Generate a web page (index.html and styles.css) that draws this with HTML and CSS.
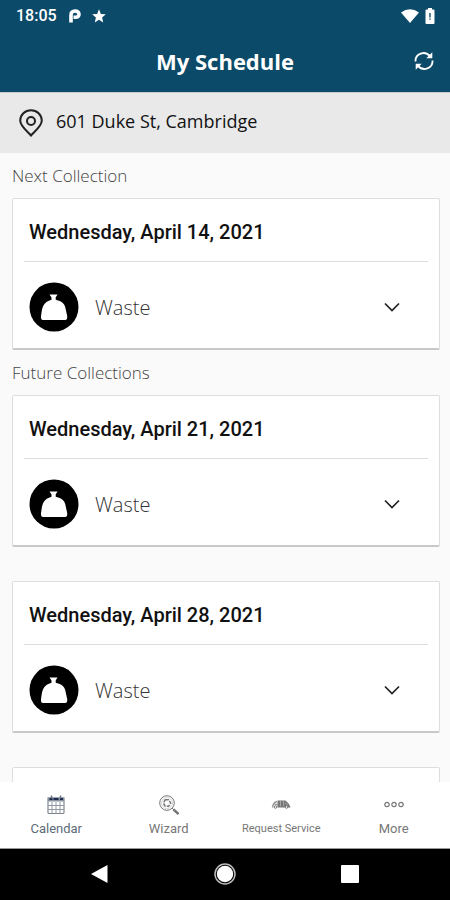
FILE: index.html
```html
<!DOCTYPE html>
<html lang="en">
<head>
<meta charset="utf-8">
<meta name="viewport" content="width=device-width, initial-scale=1">
<title>My Schedule</title>
<link rel="stylesheet" href="styles.css">
</head>
<body>
<svg class="symbols" aria-hidden="true">
  <symbol id="waste" viewBox="0 0 50 50">
    <circle cx="25" cy="25" r="24.5" fill="#000"/>
    <path fill="#fff" d="M20.500 12.500h8l-1.800 3v2.300l2.500.8c4 1.200 6 3.400 7 6.400l2 9q.4 4-2 4H14q-2.400 0-2-4l1-6.500c1-4.500 3.500-7.500 7.500-8.900l2-.8v-2.300z"/>
  </symbol>
  <symbol id="chevron" viewBox="0 0 18 18">
    <path d="M2 5.500l7 7 7-7" fill="none" stroke="#222" stroke-width="1.700"/>
  </symbol>
</svg>

<div class="status">
  <time class="clock">18:05</time>
  <svg width="12" height="14" viewBox="0 0 12 14"><path fill="none" stroke="#fff" stroke-width="3.600" d="M2 13.500V6q0-4 4-4 4 0 4 3.300 0 3-3.600 3H4.500"/></svg>
  <svg class="star" width="14" height="14" viewBox="0 0 14 14"><path fill="#fff" d="M7 .3l1.900 4.600 4.900.4-3.700 3.200 1.100 4.900L7 10.800l-4.200 2.600 1.100-4.900L.2 5.300l4.900-.4z"/></svg>
  <svg class="wifi" width="18" height="14" viewBox="0 0 18 14"><path fill="#fff" d="M0 3.500Q9-3.200 18 3.500L9 14z"/></svg>
  <svg width="10" height="16" viewBox="0 0 10 16"><path fill="#fff" d="M3 0h4v1.500h1.500q1 0 1 1V15q0 1-1 1h-7q-1 0-1-1V2.500q0-1 1-1H3z"/><path stroke="#0b4a68" stroke-width="1.400" d="M5 5v4.500M5 10.500v1.300"/></svg>
</div>

<header class="header">
  <h1>My Schedule</h1>
  <button class="refresh" type="button" aria-label="Refresh">
    <svg width="20" height="20" viewBox="0 0 20 20"><g fill="none" stroke="#fff" stroke-width="1.800"><path d="M1.500 10.500C1 2.500 11-.8 16 5.200M18.500 9.500C19 17.500 9 20.800 4 14.800"/></g><path fill="#fff" d="M18.300 1.200v6h-6zM1.700 18.800v-6h6z"/></svg>
  </button>
</header>

<div class="address">
  <svg width="24" height="28" viewBox="0 0 24 28"><g fill="none" stroke="#222" stroke-width="2"><path d="M12 26.500C9 23 1.200 17.500 1.200 11.600a10.800 10.400 0 0 1 21.600 0C22.800 17.500 15 23 12 26.500z"/><circle cx="12" cy="12" r="4"/></g></svg>
  <span>601 Duke St, Cambridge</span>
</div>

<main class="content">
  <h2>Next Collection</h2>
  <section class="card">
    <h3>Wednesday, April 14, 2021</h3>
    <button class="item" type="button" aria-expanded="false">
      <svg width="50" height="50"><use href="#waste"/></svg>
      <span>Waste</span>
      <svg class="chevron" width="18" height="18"><use href="#chevron"/></svg>
    </button>
  </section>

  <h2>Future Collections</h2>
  <div class="cards">
    <section class="card">
      <h3>Wednesday, April 21, 2021</h3>
      <button class="item" type="button" aria-expanded="false">
        <svg width="50" height="50"><use href="#waste"/></svg>
        <span>Waste</span>
        <svg class="chevron" width="18" height="18"><use href="#chevron"/></svg>
      </button>
    </section>
    <section class="card">
      <h3>Wednesday, April 28, 2021</h3>
      <button class="item" type="button" aria-expanded="false">
        <svg width="50" height="50"><use href="#waste"/></svg>
        <span>Waste</span>
        <svg class="chevron" width="18" height="18"><use href="#chevron"/></svg>
      </button>
    </section>
    <section class="card"></section>
  </div>
</main>

<nav class="tabs">
  <a class="active" href="#calendar">
    <svg width="20" height="20" viewBox="0 0 20 20"><path fill="#fff" stroke="#7d8792" stroke-width="1.200" d="M2 3h16v14.500q0 1-1 1H3q-1 0-1-1z"/><path stroke="#9099a4" d="M2 10.500h16M2 14.500h16M6 7v11M10 7v11M14 7v11"/><path fill="#89929c" d="M2 2.500h16v4H2z"/><path fill="#1c2b50" d="M3.500 3h3v2h-3zM7.500 3h5v2h-5zM14 3h3v2h-3z"/><path stroke="#68717f" stroke-width="1.500" d="M5.500.5v3M14.500.5v3"/></svg>
    <span>Calendar</span>
  </a>
  <a href="#wizard">
    <svg width="20" height="20" viewBox="0 0 20 20"><g fill="none" stroke="#777"><circle cx="8" cy="8" r="7.300"/><circle cx="8" cy="8" r="5.500" stroke="#bbb" stroke-width=".6"/><path stroke-width="1.500" stroke-dasharray="3.500 1.200" d="M6.300 4.800h3.400l2 3.400-2 3H6.300l-2-3z"/><path stroke-width="2.400" d="M14.500 14.500l5 4.500"/><path d="M13 13l2 2"/></g></svg>
    <span>Wizard</span>
  </a>
  <a href="#request">
    <svg width="20" height="20" viewBox="0 0 20 20"><path fill="#777" d="M6.500 5.500h8L18 9l1.500 3.500H6.500z"/><path fill="none" stroke="#999" stroke-width="1.500" d="M6 6.500Q2 7.500 1.500 12.500M3.500 9.500h3"/><path stroke="#bbb" stroke-width=".7" d="M9.500 5.500v6M12.500 6v5M14 8l3 2"/><g fill="#fff" stroke="#777"><circle cx="4.500" cy="12" r="1.300"/><circle cx="15.500" cy="12" r="1.300"/></g></svg>
    <span class="small">Request Service</span>
  </a>
  <a href="#more">
    <svg width="20" height="20" viewBox="0 0 20 20"><g fill="none" stroke="#777" stroke-width="1.200"><circle cx="3" cy="9.500" r="2.200"/><circle cx="10" cy="9.500" r="2.200"/><circle cx="17" cy="9.500" r="2.200"/></g></svg>
    <span>More</span>
  </a>
</nav>

<div class="system">
  <button type="button" aria-label="Back"><svg width="20" height="20" viewBox="0 0 20 20"><path fill="#fff" d="M1 10L17.500 1v18z"/></svg></button>
  <button type="button" aria-label="Home"><svg width="22" height="22" viewBox="0 0 22 22"><circle cx="11" cy="11" r="10" fill="none" stroke="#bbb" stroke-width="1.500"/><circle cx="11" cy="11" r="8.200" fill="#fff"/></svg></button>
  <button type="button" aria-label="Recent apps"><svg width="20" height="20" viewBox="0 0 20 20"><rect x="1" y="1" width="18" height="18" rx="1" fill="#fff"/></svg></button>
</div>
</body>
</html>
```

FILE: styles.css
```css
* {
  box-sizing: border-box;
}

body {
  margin: 0;
  height: 100vh;
  display: flex;
  flex-direction: column;
  background: #fafafa;
  color: #111;
  font-family: "Open Sans", sans-serif;
}

h1, h2, h3 {
  margin: 0;
}

svg {
  display: block;
  flex: none;
}

button {
  margin: 0;
  padding: 0;
  border: 0;
  background: none;
  color: inherit;
  font: inherit;
}

.symbols {
  position: absolute;
  width: 0;
  height: 0;
}

.status {
  flex: none;
  height: 32px;
  padding: 0 15px 0 16px;
  display: flex;
  align-items: center;
  background: #0b4a68;
  color: #fff;
}

.clock {
  margin-right: 12px;
  font: 500 16px/20px Roboto, sans-serif;
}

.star {
  margin-left: 11px;
}

.wifi {
  margin: 0 6px 0 auto;
}

.header {
  flex: none;
  height: 60px;
  padding: 0 16px 2px;
  display: grid;
  grid-template-columns: 20px 1fr 20px;
  align-items: center;
  background: #0b4a68;
  color: #fff;
}

.header h1 {
  grid-column: 2;
  text-align: center;
  font-size: 22px;
  font-weight: 700;
  line-height: 30px;
}

.address {
  flex: none;
  height: 61px;
  padding: 0 19px;
  display: flex;
  align-items: center;
  gap: 13px;
  background: #e9e9e9;
  border-top: 1px solid #c8cdd0;
  font-size: 18px;
  line-height: 24px;
}

.address span {
  padding-bottom: 4px;
}

.content {
  flex: 1;
  min-height: 0;
  padding: 0 10px 0 12px;
  overflow-y: auto;
  scrollbar-width: none;
}

.content h2 {
  padding: 11px 0;
  color: #444;
  font-size: 17px;
  font-weight: 300;
  line-height: 23px;
}

.cards {
  display: flex;
  flex-direction: column;
  gap: 34px;
}

.card {
  min-height: 152px;
  padding: 0 11px;
  border: 1px solid #ddd;
  border-bottom: 2px solid #c8c8c8;
  border-radius: 2px;
  background: #fff;
}

.card h3 {
  padding: 21px 5px 16px;
  border-bottom: 1px solid #ddd;
  font: 500 20px/25px Roboto, sans-serif;
}

.item {
  width: 100%;
  padding: 20px 27px 16px 5px;
  display: flex;
  align-items: center;
  gap: 16px;
  color: #333;
  font-size: 20px;
  font-weight: 300;
  text-align: left;
}

.chevron {
  margin-left: auto;
}

.tabs {
  flex: none;
  height: 67px;
  display: grid;
  grid-template-columns: repeat(4, 1fr);
  background: #fff;
  border-bottom: 1px solid #999;
}

.tabs a {
  padding-top: 13px;
  display: flex;
  flex-direction: column;
  align-items: center;
  gap: 5px;
  color: #777;
  font: 400 13px/18px Roboto, sans-serif;
  text-decoration: none;
}

.tabs .active {
  color: #5d6b78;
}

.tabs .small {
  font-size: 11px;
}

.system {
  flex: none;
  height: 51px;
  padding: 0 37px 2px;
  display: grid;
  grid-template-columns: repeat(3, 1fr);
  place-items: center;
  background: #000;
}
```
